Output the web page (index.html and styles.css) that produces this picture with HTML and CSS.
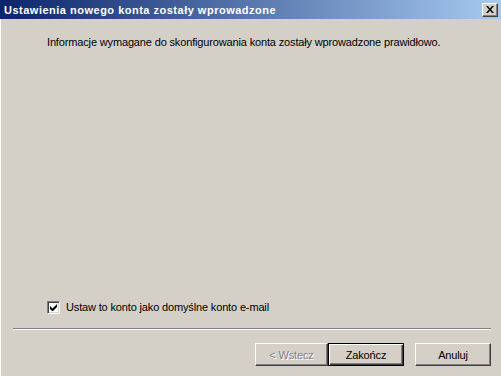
FILE: index.html
```html
<!DOCTYPE html>
<html lang="pl">
<head>
    <meta charset="UTF-8">
    <meta name="viewport" content="width=device-width, initial-scale=1.0">
    <title>Ustawienia nowego konta</title>
    <link rel="stylesheet" href="styles.css">
</head>
<body>
    <div class="dialog">
        <div class="title-bar">
            <span class="title">Ustawienia nowego konta zostały wprowadzone</span>
            <span class="close-btn">
                <svg viewBox="0 0 8 7" width="8" height="7">
                    <path d="M0 0h2l2 2.5L6 0h2L5 3.5 8 7H6L4 4.5 2 7H0l3-3.5z" fill="#000"></path>
                </svg>
            </span>
        </div>

        <div class="content">
            <p class="info">Informacje wymagane do skonfigurowania konta zostały wprowadzone prawidłowo.</p>

            <label class="check-row">
                <span class="checkbox">
                    <svg viewBox="0 0 7 7" width="7" height="7">
                        <path d="M0 2v3l2 2h1l4-4V0L2.5 4.5z" fill="#000"></path>
                    </svg>
                </span>
                Ustaw to konto jako domyślne konto e-mail
            </label>
        </div>

        <div class="separator"></div>

        <!-- przyciski kreatora -->
        <div class="buttons">
            <span class="btn btn-back disabled">&lt; Wstecz</span>
            <span class="btn btn-default">Zakończ</span>
            <span class="btn btn-cancel">Anuluj</span>
        </div>
    </div>
</body>
</html>
```

FILE: styles.css
```css
body {
    margin: 0;
    background-color: #d4d0c8;
    font-family: "Liberation Sans", Arial, sans-serif;
    font-size: 11px;
    letter-spacing: -0.15px;
    color: #000;
}

.dialog {
    height: 376px;
    display: flex;
    flex-direction: column;
    border-left: 1px solid #fff;
    box-sizing: border-box;
}

.title-bar {
    height: 19px;
    margin-left: -1px;
    display: flex;
    align-items: center;
    justify-content: space-between;
    padding: 0 3px 0 4px;
    background: linear-gradient(to right, #0a246a, #a6caf0);
}

.title {
    color: #fff;
    font-weight: bold;
    font-size: 11px;
    letter-spacing: 0.5px;
}

.close-btn {
    width: 16px;
    height: 14px;
    box-sizing: border-box;
    display: flex;
    align-items: center;
    justify-content: center;
    background-color: #d4d0c8;
    border-top: 1px solid #fff;
    border-left: 1px solid #fff;
    border-right: 1px solid #404040;
    border-bottom: 1px solid #404040;
    box-shadow: inset -1px -1px 0 #808080;
}

.content {
    flex: 1;
    display: flex;
    flex-direction: column;
    padding: 17px 0 14px 46px;
}

.info {
    margin: 0;
    line-height: 13px;
}

.check-row {
    margin-top: auto;
    display: flex;
    align-items: center;
    line-height: 13px;
}

.checkbox {
    width: 13px;
    height: 13px;
    box-sizing: border-box;
    margin-right: 6px;
    display: flex;
    align-items: center;
    justify-content: center;
    background-color: #fff;
    border-top: 1px solid #808080;
    border-left: 1px solid #808080;
    border-right: 1px solid #fff;
    border-bottom: 1px solid #fff;
    box-shadow: inset 1px 1px 0 #404040, inset -1px -1px 0 #d4d0c8;
}

.separator {
    margin: 0 10px 0 12px;
    border-top: 1px solid #808080;
    border-bottom: 1px solid #fff;
}

.buttons {
    display: flex;
    justify-content: flex-end;
    padding: 13px 10px 10px 0;
}

.btn {
    height: 23px;
    box-sizing: border-box;
    display: flex;
    align-items: center;
    justify-content: center;
    background-color: #d4d0c8;
    border-top: 1px solid #fff;
    border-left: 1px solid #fff;
    border-right: 1px solid #404040;
    border-bottom: 1px solid #404040;
    box-shadow: inset -1px -1px 0 #808080;
}

.btn-back {
    width: 73px;
}

.btn-default {
    width: 76px;
    border: 1px solid #000;
    box-shadow: inset 1px 1px 0 #fff, inset -1px -1px 0 #404040, inset -2px -2px 0 #808080;
}

.btn-cancel {
    width: 76px;
    margin-left: 11px;
}

.disabled {
    color: #808080;
    text-shadow: 1px 1px 0 #fff;
}
```
